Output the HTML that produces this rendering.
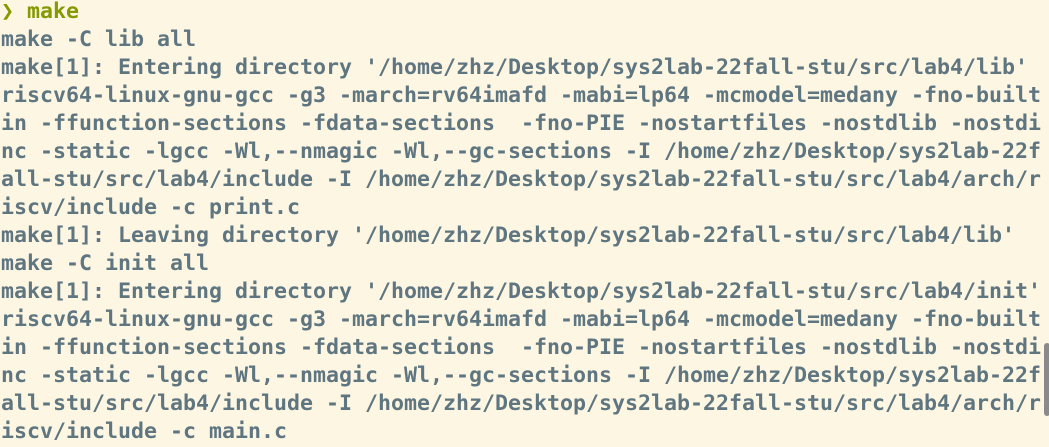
<!DOCTYPE html>
<html><head><style>
html,body{margin:0;padding:0;width:1049px;height:447px;overflow:hidden;background:#fdf6e3;}
pre{position:absolute;left:1px;top:-2px;margin:0;font-family:"DejaVu Sans Mono","Liberation Mono",monospace;font-weight:bold;font-size:21.6px;line-height:28px;color:#5f7680;white-space:pre;}
.g{color:#859900}
.sb{position:absolute;left:1044px;top:343px;width:6px;height:73px;background:#8a8a8a;border-radius:3px;}
</style></head><body>
<pre><span class="g">❯ make</span>
make -C lib all
make[1]: Entering directory '/home/zhz/Desktop/sys2lab-22fall-stu/src/lab4/lib'
riscv64-linux-gnu-gcc -g3 -march=rv64imafd -mabi=lp64 -mcmodel=medany -fno-built
in -ffunction-sections -fdata-sections  -fno-PIE -nostartfiles -nostdlib -nostdi
nc -static -lgcc -Wl,--nmagic -Wl,--gc-sections -I /home/zhz/Desktop/sys2lab-22f
all-stu/src/lab4/include -I /home/zhz/Desktop/sys2lab-22fall-stu/src/lab4/arch/r
iscv/include -c print.c
make[1]: Leaving directory '/home/zhz/Desktop/sys2lab-22fall-stu/src/lab4/lib'
make -C init all
make[1]: Entering directory '/home/zhz/Desktop/sys2lab-22fall-stu/src/lab4/init'
riscv64-linux-gnu-gcc -g3 -march=rv64imafd -mabi=lp64 -mcmodel=medany -fno-built
in -ffunction-sections -fdata-sections  -fno-PIE -nostartfiles -nostdlib -nostdi
nc -static -lgcc -Wl,--nmagic -Wl,--gc-sections -I /home/zhz/Desktop/sys2lab-22f
all-stu/src/lab4/include -I /home/zhz/Desktop/sys2lab-22fall-stu/src/lab4/arch/r
iscv/include -c main.c</pre>
<div class="sb"></div>
</body></html>
